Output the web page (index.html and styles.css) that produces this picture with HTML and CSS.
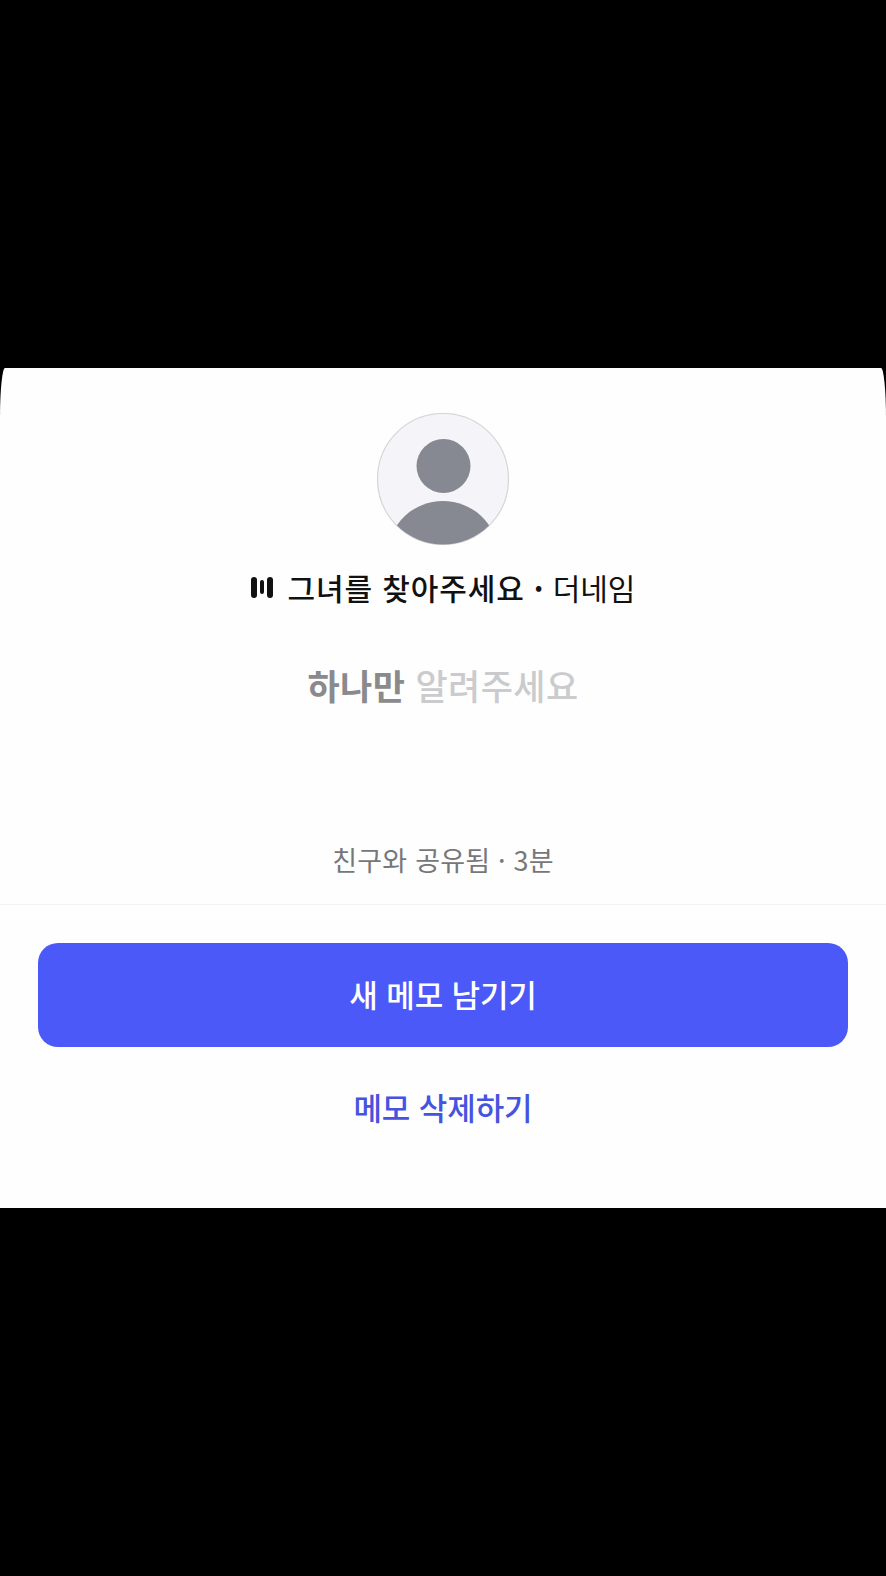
FILE: index.html
```html
<!DOCTYPE html>
<html lang="ko">

<head>
  <meta charset="UTF-8">
  <meta name="viewport" content="width=device-width, initial-scale=1.0">
  <link rel="stylesheet" href="styles.css">
  <title>메모</title>
</head>

<body>
  <div class="sheet">
    <div class="top">
      <svg class="avatar" viewBox="0 0 132 132" role="img" aria-label="프로필">
        <defs>
          <clipPath id="avatar-clip">
            <circle cx="66" cy="66" r="65.5"></circle>
          </clipPath>
        </defs>
        <circle cx="66" cy="66" r="65.5" fill="#f4f4f9" stroke="#d6d6d9" stroke-width="1.2"></circle>
        <g clip-path="url(#avatar-clip)" fill="#868892">
          <circle cx="66.5" cy="53" r="27"></circle>
          <ellipse cx="66" cy="139" rx="54" ry="51"></ellipse>
        </g>
      </svg>

      <div class="track">
        <span class="bars"><i class="bar"></i><i class="bar short"></i><i class="bar"></i></span>
        <span class="track-name">그녀를 찾아주세요</span>
        <span class="track-dot">·</span>
        <span class="track-artist">더네임</span>
      </div>

      <div class="note"><b>하나만</b> <span class="note-rest">알려주세요</span></div>

      <div class="meta">친구와 공유됨 · 3분</div>
    </div>

    <div class="actions">
      <button class="btn-primary">새 메모 남기기</button>
      <button class="btn-link">메모 삭제하기</button>
    </div>
  </div>
</body>

</html>
```

FILE: styles.css
```css
body {
  margin: 0;
  height: 1576px;
  background-color: #000;
  font-family: "Noto Sans CJK KR", "Noto Sans", sans-serif;
  overflow: hidden;
}

.sheet {
  margin-top: 368px;
  height: 840px;
  background-color: #fefefe;
  border-top-left-radius: 5px 50px;
  border-top-right-radius: 5px 50px;
}

.top {
  display: flex;
  flex-direction: column;
  align-items: center;
  padding-top: 45px;
  height: 491px;
  border-bottom: 1px solid #f3f3f5;
}

.avatar {
  width: 132px;
  height: 132px;
  display: block;
}

.track {
  display: flex;
  align-items: center;
  margin-top: 19px;
  height: 46px;
  font-size: 30px;
  color: #111;
}

.bars {
  display: flex;
  align-items: center;
  gap: 3px;
  margin-right: 15px;
}

.bar {
  display: block;
  width: 6px;
  height: 21px;
  border-radius: 3px;
  background-color: #111;
}

.bar.short {
  width: 4px;
  height: 14px;
}

.track-name {
  font-weight: 500;
  letter-spacing: 0.9px;
}

.track-dot {
  margin: 0 9px;
  font-weight: 700;
}

.note {
  margin-top: 50px;
  font-size: 35px;
  line-height: 50px;
  letter-spacing: 0.4px;
  color: #8a8a8c;
}

.note b {
  font-weight: 700;
}

.note-rest {
  color: #cbcbcd;
  font-weight: 500;
}

.meta {
  margin-top: 130px;
  font-size: 27px;
  line-height: 40px;
  letter-spacing: 0.2px;
  color: #77777a;
}

.actions {
  display: flex;
  flex-direction: column;
  align-items: center;
  padding: 38px 38px 0;
}

.btn-primary {
  width: 100%;
  height: 104px;
  padding: 0 0 4px;
  border: none;
  border-radius: 20px;
  background-color: #4a59f7;
  color: #fff;
  font-family: inherit;
  font-size: 31px;
  font-weight: 500;
  letter-spacing: -0.15px;
}

.btn-link {
  margin-top: 37px;
  padding: 0;
  border: none;
  background: none;
  color: #4553e0;
  font-family: inherit;
  font-size: 31px;
  line-height: 46px;
  font-weight: 500;
  letter-spacing: -0.1px;
}
```
